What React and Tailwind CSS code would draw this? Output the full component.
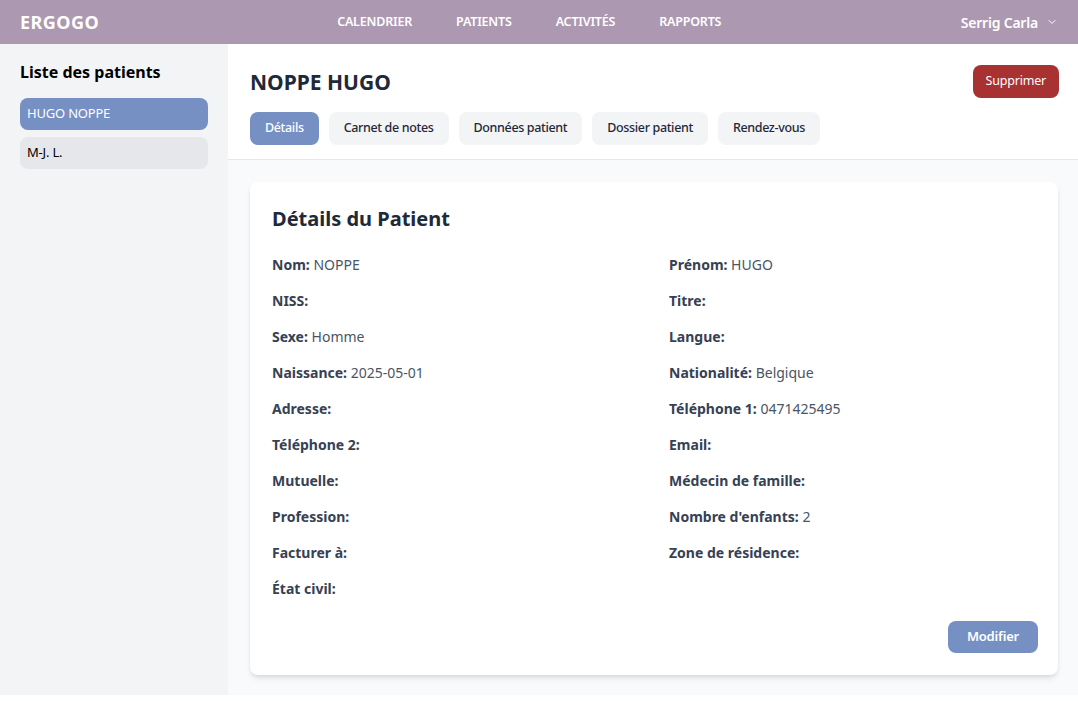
import React, { useState } from "react";
import { FiChevronDown } from "react-icons/fi";

const patients = [
  { id: 1, name: "HUGO NOPPE" },
  { id: 2, name: "M-J. L." },
];

const tabs = ["Détails", "Carnet de notes", "Données patient", "Dossier patient", "Rendez-vous"];

const fields = [
  ["Nom", "NOPPE"],
  ["Prénom", "HUGO"],
  ["NISS", ""],
  ["Titre", ""],
  ["Sexe", "Homme"],
  ["Langue", ""],
  ["Naissance", "2025-05-01"],
  ["Nationalité", "Belgique"],
  ["Adresse", ""],
  ["Téléphone 1", "0471425495"],
  ["Téléphone 2", ""],
  ["Email", ""],
  ["Mutuelle", ""],
  ["Médecin de famille", ""],
  ["Profession", ""],
  ["Nombre d'enfants", "2"],
  ["Facturer à", ""],
  ["Zone de résidence", ""],
  ["État civil", ""],
];

const App = () => {
  const [selected, setSelected] = useState(1);
  const [activeTab, setActiveTab] = useState("Détails");

  return (
    <div className="min-h-screen bg-white font-['Noto_Sans',sans-serif]">
      {/* Navbar */}
      <nav className="h-[44px] bg-[#ac98b0] flex items-center px-5 text-white">
        <span className="text-[18px] font-bold tracking-wide">ERGOGO</span>
        <div className="flex items-center gap-[44px] text-[12.5px] font-semibold tracking-[-0.2px] ml-[238px]">
          <a>CALENDRIER</a>
          <a>PATIENTS</a>
          <a>ACTIVITÉS</a>
          <a>RAPPORTS</a>
        </div>
        <div className="ml-auto flex items-center gap-2 text-[14px] font-semibold tracking-[-0.2px]">
          Serrig Carla
          <FiChevronDown className="w-3 h-3" />
        </div>
      </nav>

      <div className="flex h-[651px]">
        {/* Sidebar */}
        <aside className="w-[228px] bg-gray-100 px-5 pt-[16px]">
          <h2 className="text-[16px] font-bold text-black mb-[14px]">Liste des patients</h2>
          <ul className="flex flex-col gap-[7px]">
            {patients.map((p) => (
              <li
                key={p.id}
                onClick={() => setSelected(p.id)}
                className={`h-[32px] flex items-center px-[7px] rounded-lg text-[13px] tracking-[-0.2px] cursor-pointer ${
                  selected === p.id ? "bg-[#7690c4] text-white" : "bg-gray-200 text-black"
                }`}
              >
                {p.name}
              </li>
            ))}
          </ul>
        </aside>

        {/* Main */}
        <main className="flex-1 bg-gray-50 flex flex-col">
          <div className="bg-white border-b border-gray-200 pl-[22px] pr-[19px] pt-[21px] pb-[14px]">
            <div className="flex items-start justify-between">
              <h1 className="text-[21px] font-bold text-gray-800 mt-[2px]">NOPPE HUGO</h1>
              <button className="bg-[#a83232] text-white text-[12.5px] tracking-[-0.2px] px-[13px] h-[33px] rounded-lg">
                Supprimer
              </button>
            </div>
            <div className="flex gap-[10px] mt-[13px]">
              {tabs.map((t) => (
                <button
                  key={t}
                  onClick={() => setActiveTab(t)}
                  className={`h-[33px] px-[15px] rounded-lg text-[12.5px] tracking-[-0.35px] font-medium ${
                    activeTab === t ? "bg-[#7690c4] text-white" : "bg-gray-100 text-gray-800"
                  }`}
                >
                  {t}
                </button>
              ))}
            </div>
          </div>

          <div className="pl-[22px] pr-[20px] pt-[22px]">
            <div className="bg-white rounded-lg shadow-md pl-[22px] pr-[20px] pt-[22px] pb-[22px]">
              <h2 className="text-[20px] font-bold text-gray-800 mb-[21px]">Détails du Patient</h2>
              <div className="grid grid-cols-2 gap-x-7 gap-y-4 text-[14px] leading-5">
                {fields.map(([label, value]) => (
                  <p key={label} className="text-gray-600">
                    <span className="font-bold text-gray-700">{label}:</span> {value}
                  </p>
                ))}
              </div>
              <div className="flex justify-end mt-[22px]">
                <button className="bg-[#7690c4] text-white text-[13px] font-semibold tracking-[-0.2px] h-[32px] px-[19px] rounded-lg">
                  Modifier
                </button>
              </div>
            </div>
          </div>
        </main>
      </div>
    </div>
  );
};

export default App;
